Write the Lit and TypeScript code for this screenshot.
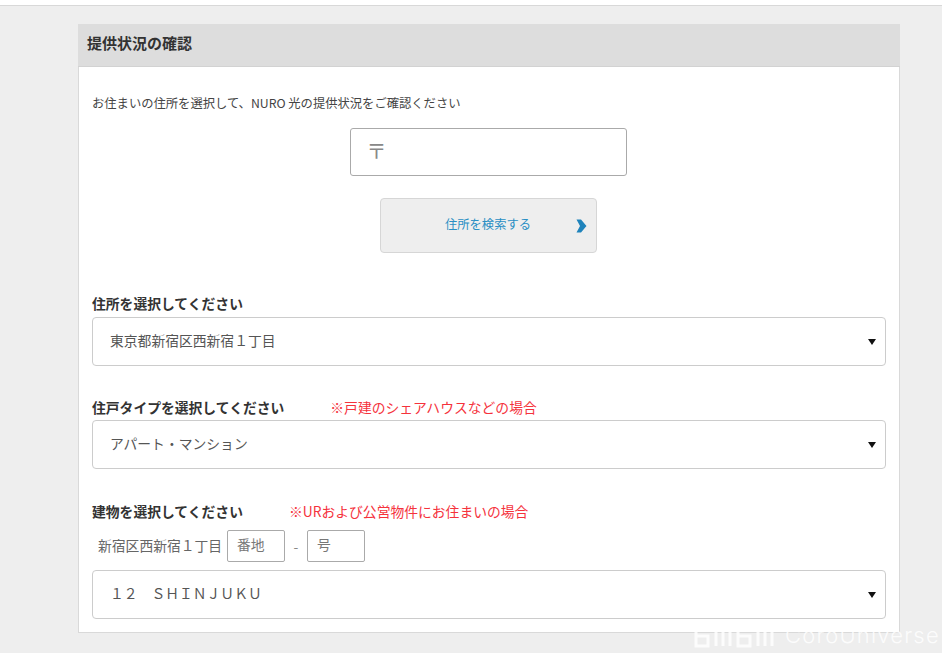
import { LitElement, html, css } from 'lit';
import { customElement, property } from 'lit/decorators.js';

@customElement('select-row')
export class SelectRow extends LitElement {
  @property({ type: String }) value = '';

  static styles = css`
    :host {
      display: block;
    }
    .box {
      display: flex;
      align-items: center;
      justify-content: space-between;
      box-sizing: border-box;
      height: 49px;
      padding: 0 9px 0 17px;
      background: #fff;
      border: 1px solid #ccc;
      border-radius: 4px;
      font-size: 13.8px;
      color: #555;
    }
    span {
      margin-top: -4px;
    }
    svg {
      display: block;
      width: 8px;
      height: 6px;
    }
  `;

  render() {
    return html`
      <div class="box">
        <span>${this.value}</span>
        <svg viewBox="0 0 8 6"><path d="M0 0H8L4 6Z" fill="#111" /></svg>
      </div>
    `;
  }
}

@customElement('app-root')
export class AppRoot extends LitElement {
  static styles = css`
    :host {
      display: block;
      position: relative;
      box-sizing: border-box;
      height: 653px;
      overflow: hidden;
      background: #eeeeee;
      font-family: 'Noto Sans CJK JP', 'Noto Sans', sans-serif;
      color: #333;
    }
    .top {
      height: 5px;
      background: #fff;
      border-bottom: 1px solid #d8d8d8;
    }
    .panel {
      box-sizing: border-box;
      width: 822px;
      height: 609px;
      margin: 18px 0 0 78px;
      background: #fff;
      border: 1px solid #d9d9d9;
      border-top: 0;
    }
    .head {
      height: 42px;
      margin: 0 -1px;
      padding-left: 9px;
      background: #dddddd;
      border-bottom: 1px solid #d2d2d2;
      font-size: 15px;
      font-weight: 700;
      line-height: 38px;
      color: #333;
    }
    .body {
      padding: 27px 13px 0;
    }
    .lead {
      height: 18px;
      font-size: 12.3px;
      line-height: 18px;
      color: #444;
    }
    .center {
      display: flex;
      flex-direction: column;
      align-items: center;
      margin-left: -2px;
      padding-top: 16px;
    }
    .zip {
      display: flex;
      align-items: center;
      box-sizing: border-box;
      width: 277px;
      height: 48px;
      padding: 0 0 4px 16px;
      border: 1px solid #aaa;
      border-radius: 3px;
      font-size: 20px;
      color: #888;
    }
    .search {
      position: relative;
      display: flex;
      align-items: center;
      justify-content: center;
      box-sizing: border-box;
      width: 217px;
      height: 55px;
      margin-top: 22px;
      padding: 0 0 3px 0;
      background: #eeeeee;
      border: 1px solid #d6d6d6;
      border-radius: 4px;
      font-size: 12.3px;
      color: #2a8fc4;
    }
    .search svg {
      position: absolute;
      right: 9px;
      top: 20px;
      width: 11px;
      height: 14px;
    }
    .label {
      display: flex;
      align-items: center;
      height: 20px;
      font-size: 13.8px;
      font-weight: 700;
      color: #333;
    }
    .note {
      font-size: 13.8px;
      font-weight: 400;
      color: #f5323c;
      margin-left: 46px;
    }
    .first {
      margin-top: 40px;
      margin-bottom: 4px;
    }
    .second {
      margin-top: 31px;
      margin-bottom: 3px;
    }
    .third {
      margin-top: 32px;
      margin-bottom: 9px;
    }
    .lot {
      display: flex;
      align-items: center;
      height: 32px;
      margin-bottom: 8px;
      padding-left: 6px;
      font-size: 13.8px;
      color: #666;
    }
    .field {
      box-sizing: border-box;
      width: 58px;
      height: 32px;
      padding-left: 9px;
      border: 1px solid #aaa;
      border-radius: 2px;
      font-size: 13.8px;
      line-height: 27px;
      color: #777;
    }
    .lot-name {
      width: 129px;
      margin-top: -3px;
    }
    .dash {
      width: 22px;
      text-align: center;
      color: #888;
    }
    .mark {
      position: absolute;
      left: 692px;
      top: 618px;
      display: flex;
      align-items: flex-end;
      gap: 9px;
      color: #fff;
      font-size: 22px;
      font-family: 'Inter', sans-serif;
      font-weight: 300;
      line-height: 32px;
      letter-spacing: 1.2px;
      opacity: 0.85;
    }
    .mark svg {
      display: block;
      width: 84px;
      height: 33px;
    }
  `;

  render() {
    return html`
      <div class="top"></div>
      <section class="panel">
        <div class="head">提供状況の確認</div>
        <div class="body">
          <div class="lead">お住まいの住所を選択して、NURO 光の提供状況をご確認ください</div>
          <div class="center">
            <div class="zip">〒</div>
            <div class="search">
              住所を検索する
              <svg viewBox="0 0 11 14">
                <path d="M0.5 0.5H5L10.5 7L5 13.5H0.5L4 7Z" fill="#1f83bb" />
              </svg>
            </div>
          </div>

          <div class="label first">住所を選択してください</div>
          <select-row value="東京都新宿区西新宿１丁目"></select-row>

          <div class="label second">住戸タイプを選択してください<span class="note">※戸建のシェアハウスなどの場合</span></div>
          <select-row value="アパート・マンション"></select-row>

          <div class="label third">建物を選択してください<span class="note">※URおよび公営物件にお住まいの場合</span></div>
          <div class="lot">
            <span class="lot-name">新宿区西新宿１丁目</span>
            <div class="field">番地</div>
            <span class="dash">-</span>
            <div class="field">号</div>
          </div>
          <select-row value="１２　ＳＨＩＮＪＵＫＵ"></select-row>
        </div>
      </section>
      <div class="mark">
        <svg viewBox="0 0 84 33" fill="none" stroke="#fff" stroke-width="3">
          <path d="M4 6V28H16V18H5" />
          <path d="M24 6V28M31 6V28M38 12V28" />
          <path d="M46 6V28H58V18H47" />
          <path d="M66 6V28M73 6V28M80 12V28" />
        </svg>
        <span>CoroUniverse</span>
      </div>
    `;
  }
}

declare global {
  interface HTMLElementTagNameMap {
    'app-root': AppRoot;
    'select-row': SelectRow;
  }
}
